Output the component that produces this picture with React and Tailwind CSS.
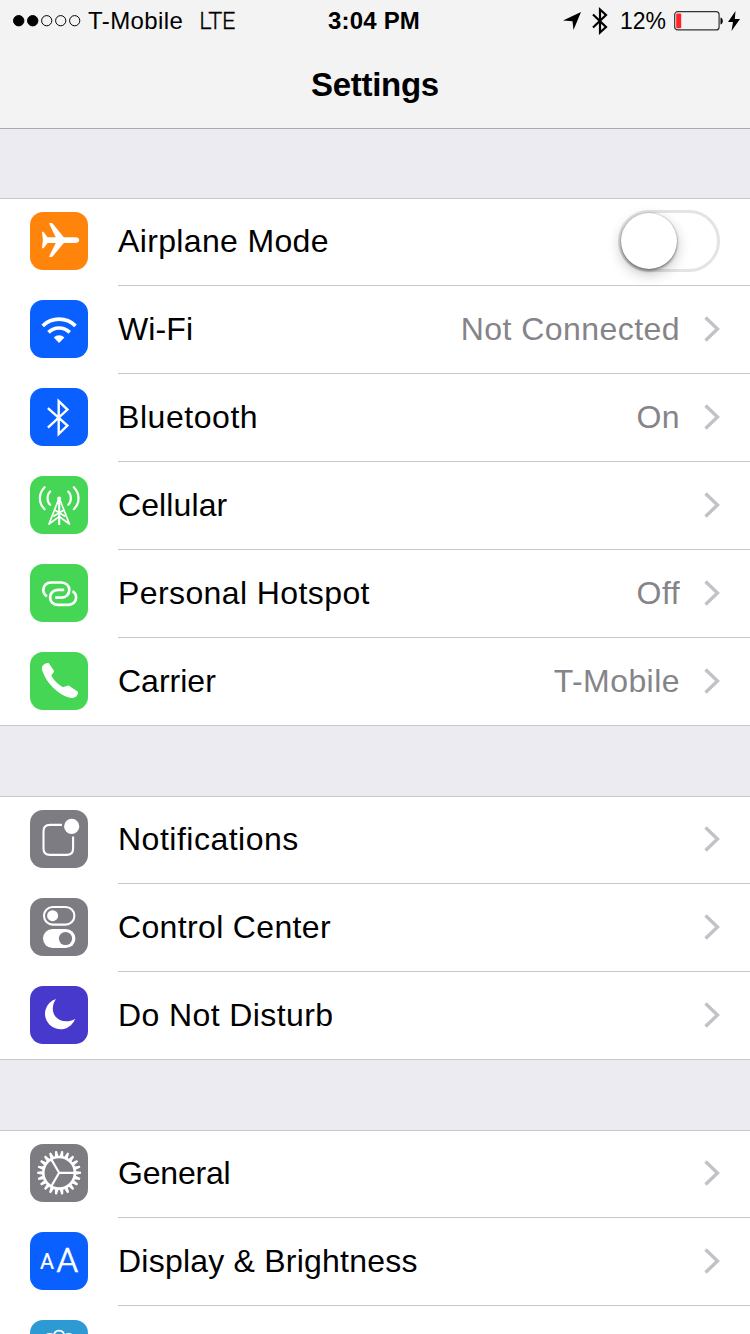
const white = '#ffffff';

function AirplaneIcon() {
  return (
    <path
      fill={white}
      d="M12 20.200c0-.4 1.400-.5 1.800 0L17.600 25.200H25.700L19.300 12.100C19 11.400 19.300 11 20 11H21.400C22 11 22.400 11.300 22.800 11.800L33.800 25.200H45.500C47.700 25.200 49.200 26.400 49.200 28.100S47.700 31 45.500 31H33.800L22.800 44.200C22.400 44.700 22 45 21.400 45H20C19.300 45 19 44.600 19.300 43.900L25.700 31H17.600L13.800 35.900c-.4.500-1.800.4-1.800 0L12.900 28.100Z"
    />
  );
}

function WifiIcon() {
  return (
    <g fill="none" stroke={white} strokeWidth="3.700">
      <path d="M12.700 25.800A23.700 23.700 0 0 1 45.500 25.800" />
      <path d="M18.500 32.400A15 15 0 0 1 39.700 32.400" />
      <path fill={white} stroke="none" d="M23.800 37.400A7.600 7.600 0 0 1 34.400 37.400L29.100 42.900Z" />
    </g>
  );
}

function BluetoothIcon() {
  return (
    <path
      fill="none"
      stroke={white}
      strokeWidth="2.400"
      d="M17.900 20.200L37.400 37.600L28.700 46V13.200L37.400 21.600L17.900 39.700"
    />
  );
}

function CellularIcon() {
  return (
    <g fill="none" stroke={white} strokeWidth="2.200" strokeLinecap="round">
      <path d="M14.600 11.200C8.300 17.500 8.300 27.200 14.600 33.200M43.800 11.200C50.100 17.500 50.100 27.200 43.800 33.200" />
      <path d="M20.200 15.500C16.700 18.700 16.700 25.700 20.200 28.800M38.200 15.500C41.700 18.700 41.700 25.700 38.200 28.800" />
      <path d="M29.200 23V49" strokeWidth="2.100" strokeLinecap="butt" />
      <path d="M28.400 24L19 48M30 24L39.400 48M25.500 34.500L34.500 40M33 34.500L24 40M19 48L29.200 40.500L39.400 48" strokeWidth="1.700" />
      <circle cx="29.200" cy="22.700" r="2.100" fill={white} stroke="none" />
    </g>
  );
}

function HotspotIcon() {
  return (
    <g fill="none" stroke={white} strokeWidth="2.700">
      <path d="M17 32.300C14.600 30.900 13.300 28.800 13.300 26C13.300 21.600 16.700 18.500 21 18.500H31.500C36 18.500 39.300 21.700 39.300 25.900C39.300 30.200 36 33.600 31.500 33.600H25.200" />
      <path d="M42.400 27.100C44.800 28.500 46.100 30.600 46.100 33.400C46.100 37.800 42.700 40.900 38.400 40.900H27.900C23.400 40.900 20.100 37.700 20.100 33.500C20.100 29.200 23.400 25.800 27.900 25.800H34.200" />
    </g>
  );
}

function PhoneIcon() {
  return (
    <path
      fill={white}
      d="M13.200 13.100C14.600 11.900 16.300 11.200 17.800 11.100C18.600 11 19 11.300 19.400 12L23.800 18.600C24.200 19.300 24.100 19.800 23.600 20.400L21.900 22.600C21.400 23.300 21.400 23.800 21.800 24.500C24.200 28.600 28 32.200 32.300 34.800C33 35.200 33.500 35.200 34.200 34.800L37.700 33.700C38.300 33.500 38.800 33.700 39.400 34L46.900 38.900C47.800 39.500 48.300 40.200 48.100 40.900C47.700 42.500 46.600 44.200 45.200 45.100C43.700 46.100 41.400 46.400 38.900 45.600C27.700 42.100 16.400 31 12.300 18.700C11.600 16.500 11.700 14.500 13.200 13.100Z"
    />
  );
}

function NotificationsIcon() {
  return (
    <g fill="none" stroke={white} strokeWidth="2.100">
      <path d="M31.900 14.900H20C15.500 14.900 13.500 16.900 13.500 21.400V38.400C13.500 42.900 15.500 44.900 20 44.900H36.600C41.100 44.900 43.100 42.900 43.100 38.400V26.500" />
      <circle cx="41.700" cy="16.400" r="7.600" fill={white} stroke="none" />
    </g>
  );
}

function ControlCenterIcon() {
  return (
    <g>
      <rect x="14" y="9" width="30.400" height="17.600" rx="8.800" fill="none" stroke={white} strokeWidth="2.100" />
      <circle cx="22.600" cy="17.700" r="5.500" fill={white} />
      <rect x="13" y="31" width="32.400" height="19" rx="9.500" fill={white} />
      <circle cx="35.500" cy="40.500" r="6.600" fill="#7d7c83" />
    </g>
  );
}

function MoonIcon() {
  return (
    <path
      fill={white}
      d="M26.100 12.900A15.500 15.500 0 1 0 45.200 32.700C35.500 38.800 22.800 34 22.800 22.500C22.800 18.800 24.100 15.600 26.100 12.900Z"
    />
  );
}

const teeth = Array.from({ length: 22 }, (_, i) => (i * 360) / 22);

function GearIcon() {
  return (
    <g transform="translate(29.100 28.800)" fill="none" stroke={white}>
      <circle r="15.800" strokeWidth="2.600" />
      {teeth.map((angle) => (
        <path key={angle} d="M16.300 -1.900L21.900 -1V1L16.300 1.900Z" fill={white} stroke="none" transform={`rotate(${angle})`} />
      ))}
      <path d="M0 0H15.500M0 0L-7.800 -13.400M0 0L-7.800 13.400" strokeWidth="2.200" />
    </g>
  );
}

function DisplayIcon() {
  return (
    <g fill={white} stroke={white} className="font-[Roboto,sans-serif]">
      <text x="10.100" y="37.200" fontSize="21.500" fontWeight="400" strokeWidth="0.2">A</text>
      <text x="26.500" y="40.200" fontSize="32.500" fontWeight="300" strokeWidth="0.7" textLength="21.600" lengthAdjust="spacingAndGlyphs">A</text>
    </g>
  );
}

function WallpaperIcon() {
  return (
    <g fill="none" stroke={white} strokeWidth="1.900">
      <path d="M24.500 17C22 8.500 36 8.500 33.800 17" />
      <path d="M16 18C15 13.500 20 13 24.500 15.500M42.300 18C43.300 13.500 38.300 13 33.800 15.500" />
    </g>
  );
}

const groups = [
  [
    { label: 'Airplane Mode', spacing: 'tracking-[0.35px]', tile: 'bg-[#ff840b]', Icon: AirplaneIcon, toggle: true },
    { label: 'Wi-Fi', spacing: 'tracking-[0.1px]', tile: 'bg-[#0a60ff]', Icon: WifiIcon, value: 'Not Connected' },
    { label: 'Bluetooth', spacing: 'tracking-[0.55px]', tile: 'bg-[#0a60ff]', Icon: BluetoothIcon, value: 'On' },
    { label: 'Cellular', spacing: 'tracking-[0.1px]', tile: 'bg-[#44d654]', Icon: CellularIcon },
    { label: 'Personal Hotspot', spacing: 'tracking-[0.4px]', tile: 'bg-[#44d654]', Icon: HotspotIcon, value: 'Off' },
    { label: 'Carrier', spacing: 'tracking-[0px]', tile: 'bg-[#44d654]', Icon: PhoneIcon, value: 'T-Mobile' },
  ],
  [
    { label: 'Notifications', spacing: 'tracking-[0.5px]', tile: 'bg-[#7d7c83]', Icon: NotificationsIcon },
    { label: 'Control Center', spacing: 'tracking-[0.35px]', tile: 'bg-[#7d7c83]', Icon: ControlCenterIcon },
    { label: 'Do Not Disturb', spacing: 'tracking-[0.4px]', tile: 'bg-[#4639cb]', Icon: MoonIcon },
  ],
  [
    { label: 'General', spacing: 'tracking-[-0.2px]', tile: 'bg-[#7d7c83]', Icon: GearIcon },
    { label: 'Display & Brightness', spacing: 'tracking-[0.22px]', tile: 'bg-[#0a60ff]', Icon: DisplayIcon },
    { label: '', spacing: '', tile: 'bg-[#2e9ad3]', Icon: WallpaperIcon },
  ],
];

function Toggle() {
  return (
    <div className="h-[62px] w-[102px] rounded-full border-[3px] border-[#e4e4e4] bg-white">
      <div className="size-14 rounded-full bg-white shadow-[0_5px_14px_rgba(0,0,0,0.24),0_2px_3px_rgba(0,0,0,0.36),0_0_2px_rgba(0,0,0,0.3)]" />
    </div>
  );
}

function Row({ label, spacing, tile, Icon, value, toggle, last }) {
  return (
    <div className="flex h-[88px] shrink-0 pl-[30px]">
      <div className={`mt-3.5 size-[58px] shrink-0 overflow-hidden rounded-[13px] ${tile}`}>
        <svg viewBox="0 0 58 58" className="size-full">
          <Icon />
        </svg>
      </div>
      <div className={`ml-[30px] flex flex-1 items-center pr-[30px] pb-px ${last ? 'border-b border-transparent' : 'border-b border-[#c8c7cc]'}`}>
        <span className={`flex-1 text-[32px] leading-10 whitespace-nowrap ${spacing}`}>{label}</span>
        {value && <span className="text-[32px] leading-10 tracking-[0.45px] text-[#858489]">{value}</span>}
        {toggle && <Toggle />}
        {!toggle && label && (
          <svg viewBox="0 0 16 26" className="ml-6 h-[26px] w-4" fill="none" stroke="#c2c1c7" strokeWidth="3.400">
            <path d="M1.500 1.500L13.500 13L1.500 24.500" />
          </svg>
        )}
      </div>
    </div>
  );
}

function StatusBar() {
  return (
    <div className="flex h-[42px] items-center text-2xl leading-10">
      <div className="flex flex-1 items-center pl-[13px]">
        <svg viewBox="0 0 68 12" className="h-3 w-[68px]" stroke="#000" strokeWidth="1">
          <circle cx="5.700" cy="5.700" r="5.200" />
          <circle cx="19.700" cy="5.700" r="5.200" />
          <circle cx="33.700" cy="5.700" r="5.100" fill="none" />
          <circle cx="47.700" cy="5.700" r="5.100" fill="none" />
          <circle cx="61.700" cy="5.700" r="5.100" fill="none" />
        </svg>
        <span className="ml-[7px] tracking-[0.4px]">T-Mobile</span>
        <span className="ml-4 font-[Roboto,sans-serif] text-[23.500px] font-light tracking-[-0.2px] [-webkit-text-stroke:0.3px_#000]">LTE</span>
      </div>
      <span className="mr-[5px] text-2xl leading-10 font-bold tracking-[0.2px]">3:04 PM</span>
      <div className="flex flex-1 items-center justify-end pr-2.5">
        <svg viewBox="0 0 18 18" className="h-[18px] w-[18px]">
          <path d="M0 8.500L18 0L10.500 18L9.500 9.200Z" />
        </svg>
        <svg viewBox="0 0 16 28" className="ml-[11px] h-7 w-4" fill="none" stroke="#000" strokeWidth="2.200">
          <path d="M1 7.500L14 20L8 25.500V2.500L14 8L1 20.500" />
        </svg>
        <span className="ml-3 text-[23px]">12%</span>
        <svg viewBox="0 0 50 20" className="ml-2 h-5 w-[50px]">
          <rect x=".7" y=".7" width="44.400" height="18.200" rx="3" fill="none" stroke="#333" strokeWidth="1.200" />
          <rect x="2.200" y="2.500" width="5" height="14.800" rx="1" fill="#ff2328" />
          <path d="M46.500 6.500C49.500 7 49.500 13 46.500 13.500Z" />
        </svg>
        <svg viewBox="0 0 12 20" className="ml-1 h-5 w-3">
          <path d="M7.500 0L0 11H5L3.500 20L12 8H6.800Z" />
        </svg>
      </div>
    </div>
  );
}

export default function App() {
  return (
    <div className="flex h-[1334px] w-[750px] flex-col overflow-hidden bg-[#ebebf1] font-['Liberation_Sans',Arial,sans-serif] text-black">
      <header className="h-[129px] shrink-0 border-b border-[#acacb0] bg-[#f3f3f3]">
        <StatusBar />
        <h1 className="pt-[21px] text-center text-[33px] leading-[44px] font-bold tracking-[-0.3px]">Settings</h1>
      </header>
      <main className="flex flex-col gap-[70px] pt-[69px]">
        {groups.map((rows, g) => (
          <section key={g} className="bg-white shadow-[inset_0_1px_0_#c8c7cc,inset_0_-1px_0_#c8c7cc]">
            {rows.map((row, i) => (
              <Row key={i} {...row} last={i === rows.length - 1} />
            ))}
          </section>
        ))}
      </main>
    </div>
  );
}
